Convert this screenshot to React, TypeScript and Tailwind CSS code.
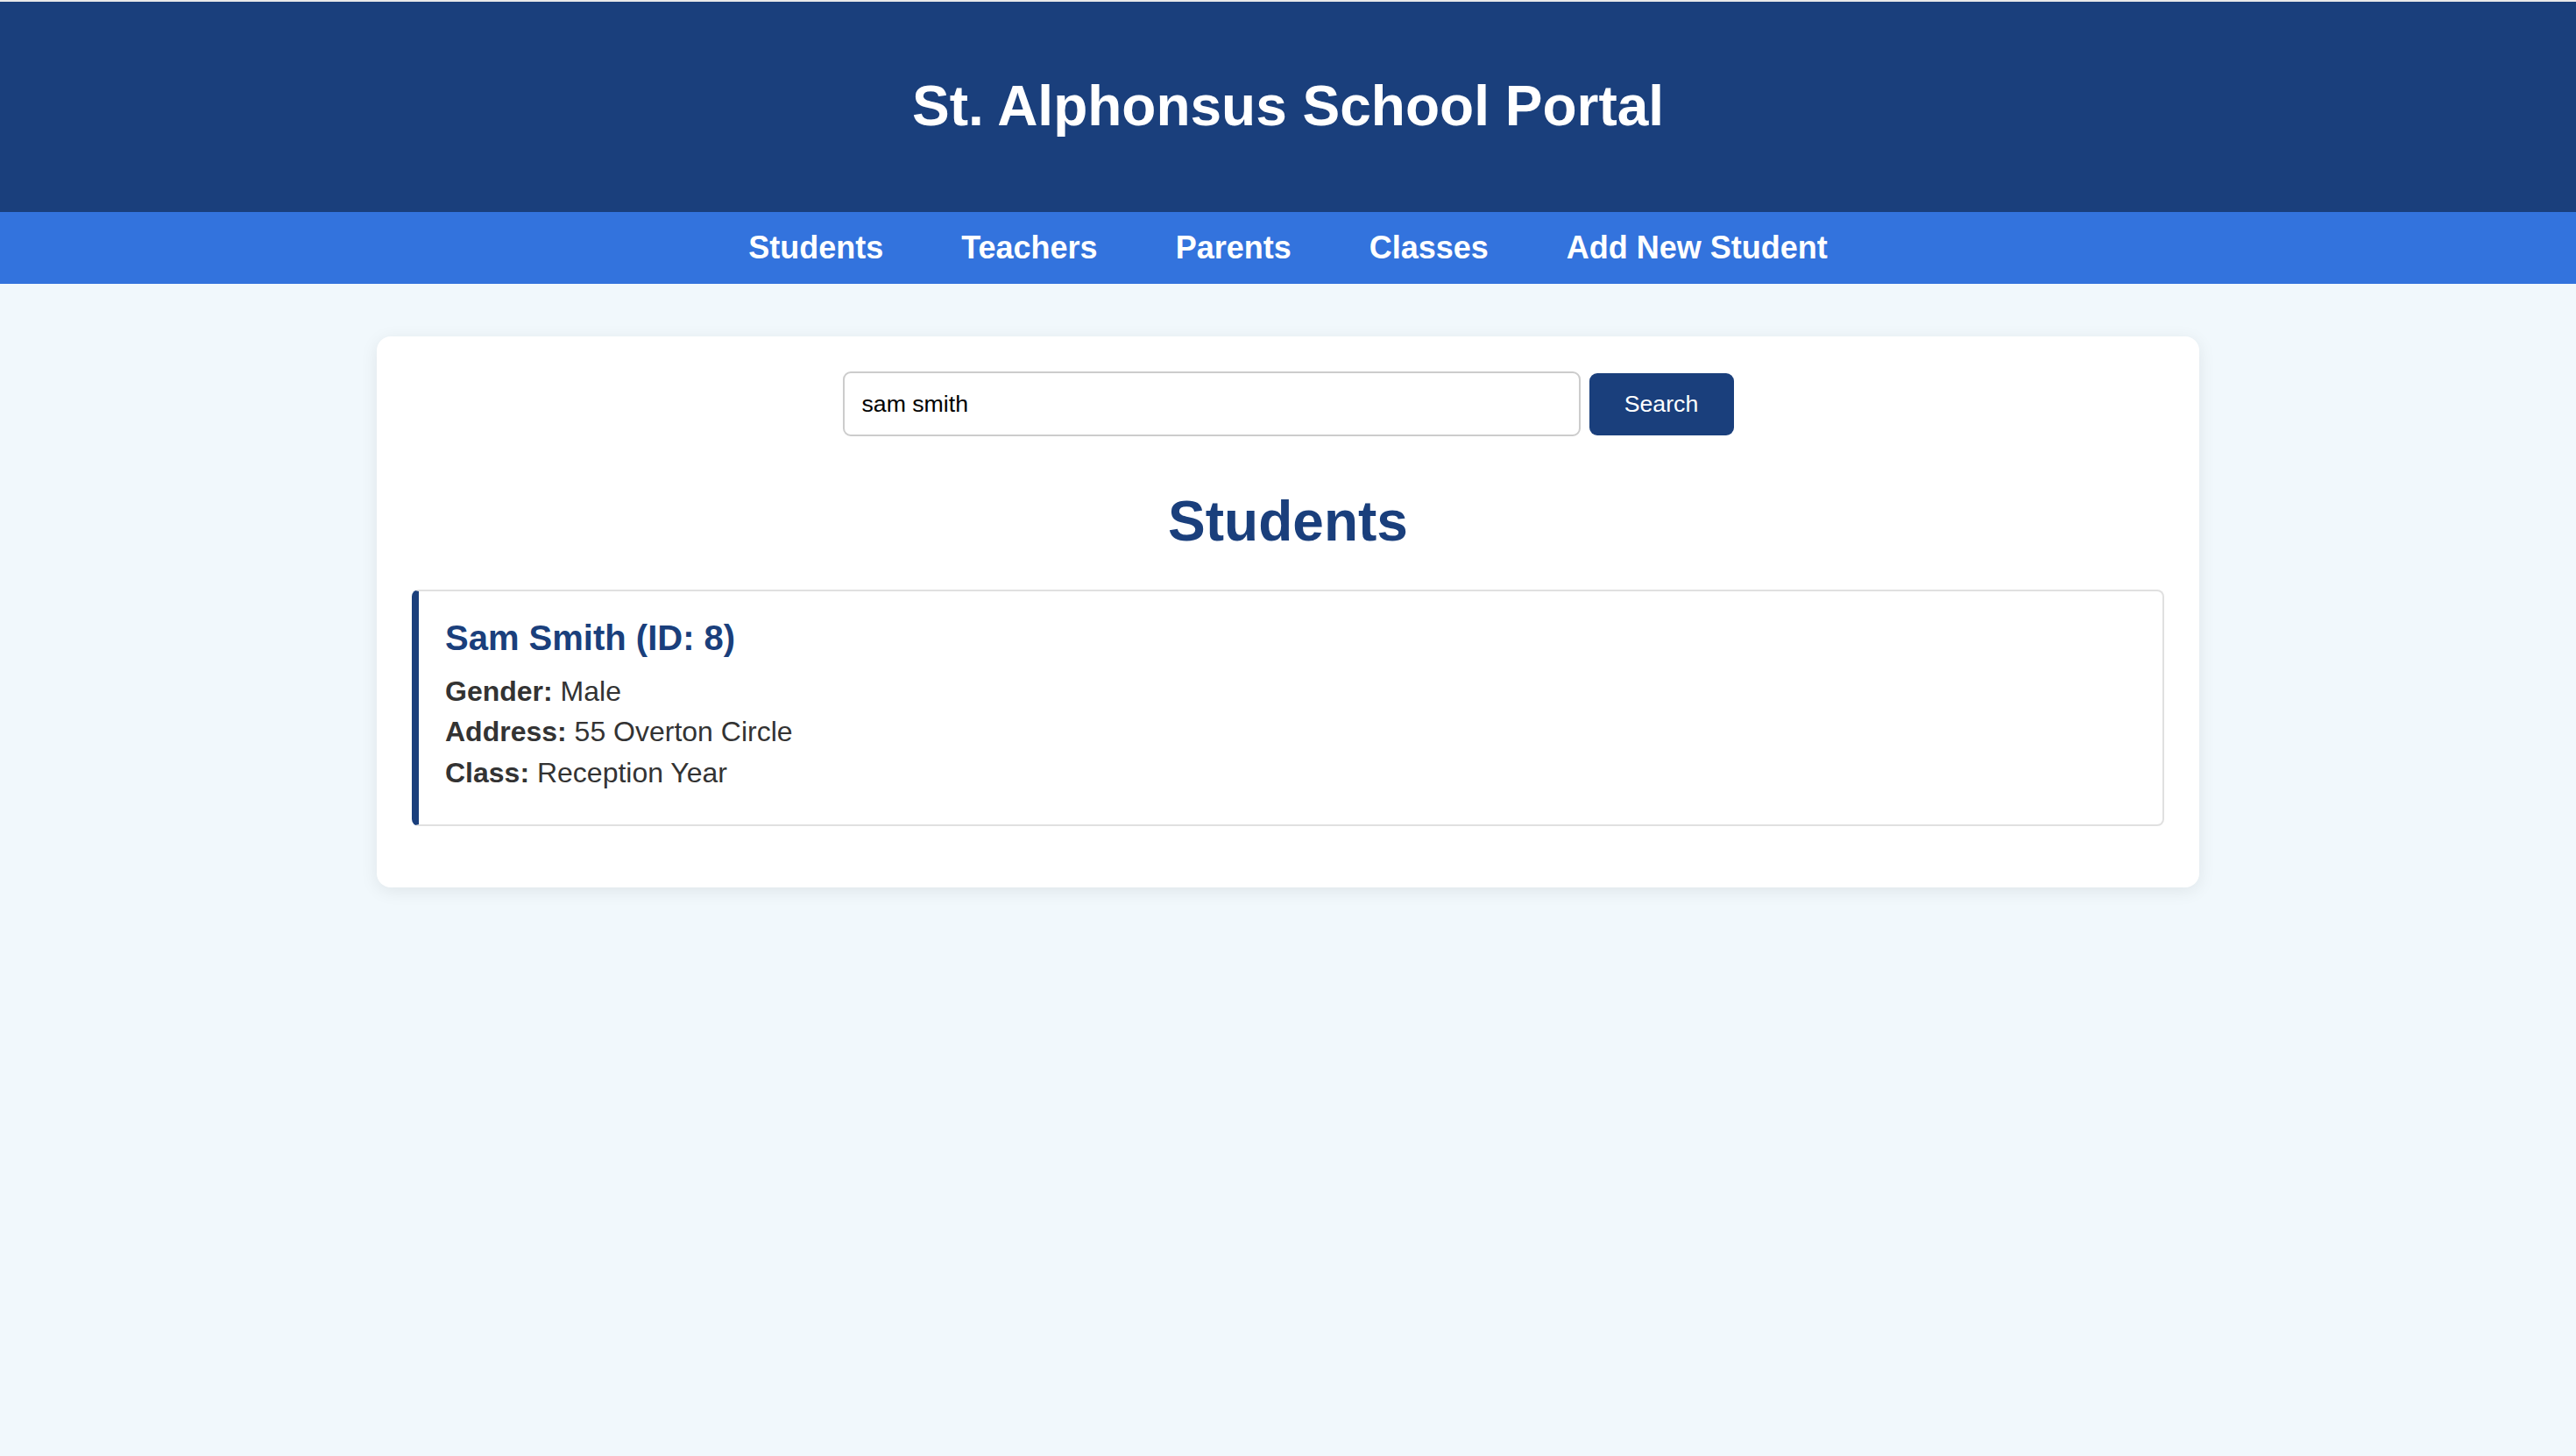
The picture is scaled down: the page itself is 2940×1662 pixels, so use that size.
import { useState } from "react";

const navItems = ["Students", "Teachers", "Parents", "Classes", "Add New Student"];

const students = [
  { id: 8, name: "Sam Smith", gender: "Male", address: "55 Overton Circle", className: "Reception Year" },
];

export default function App() {
  const [query, setQuery] = useState("sam smith");

  return (
    <div className="min-h-[1662px] border-t-2 border-[#e9e9e9] bg-[#f1f8fc] font-['Liberation_Sans',Arial,sans-serif] leading-[1.15]">
      <header className="flex h-[240px] items-center justify-center bg-[#1a3f7c]">
        <h1 className="text-[64px] font-bold text-white">St. Alphonsus School Portal</h1>
      </header>

      <nav className="flex h-[82px] items-center justify-center gap-[89px] bg-[#3373dd]">
        {navItems.map((item) => (
          <a key={item} href="#" className="text-[36px] font-bold text-white">
            {item}
          </a>
        ))}
      </nav>

      <main className="mx-auto mt-[60px] w-[2080px] rounded-2xl bg-white p-10 shadow-[0_4px_20px_rgba(0,0,0,0.08)]">
        <form className="flex items-center justify-center gap-[10px]" onSubmit={(e) => e.preventDefault()}>
          <input
            value={query}
            onChange={(e) => setQuery(e.target.value)}
            className="h-[74px] w-[842px] rounded-[9px] border-2 border-[#cccccc] bg-white px-5 text-[26.67px] text-black outline-none"
          />
          <button type="submit" className="h-[71px] w-[165px] rounded-[9px] bg-[#1a3f7c] text-[26.67px] text-white">
            Search
          </button>
        </form>

        <h2 className="mt-[61px] mb-[40px] text-center text-[64px] font-bold text-[#1a3f7c]">Students</h2>

        {students.map((s) => (
          <div
            key={s.id}
            className="mb-[30px] rounded-lg border-2 border-l-8 border-[#e0e0e0] border-l-[#1a3f7c] px-[30px] pt-[30px] pb-[30px] text-[32px] text-[#333333]"
          >
            <h3 className="mb-5 text-[40px] font-bold text-[#1a3f7c]">
              {s.name} (ID: {s.id})
            </h3>
            <p className="my-[10px]">
              <strong>Gender:</strong> {s.gender}
            </p>
            <p className="my-[10px]">
              <strong>Address:</strong> {s.address}
            </p>
            <p className="my-[10px]">
              <strong>Class:</strong> {s.className}
            </p>
          </div>
        ))}
      </main>
    </div>
  );
}
